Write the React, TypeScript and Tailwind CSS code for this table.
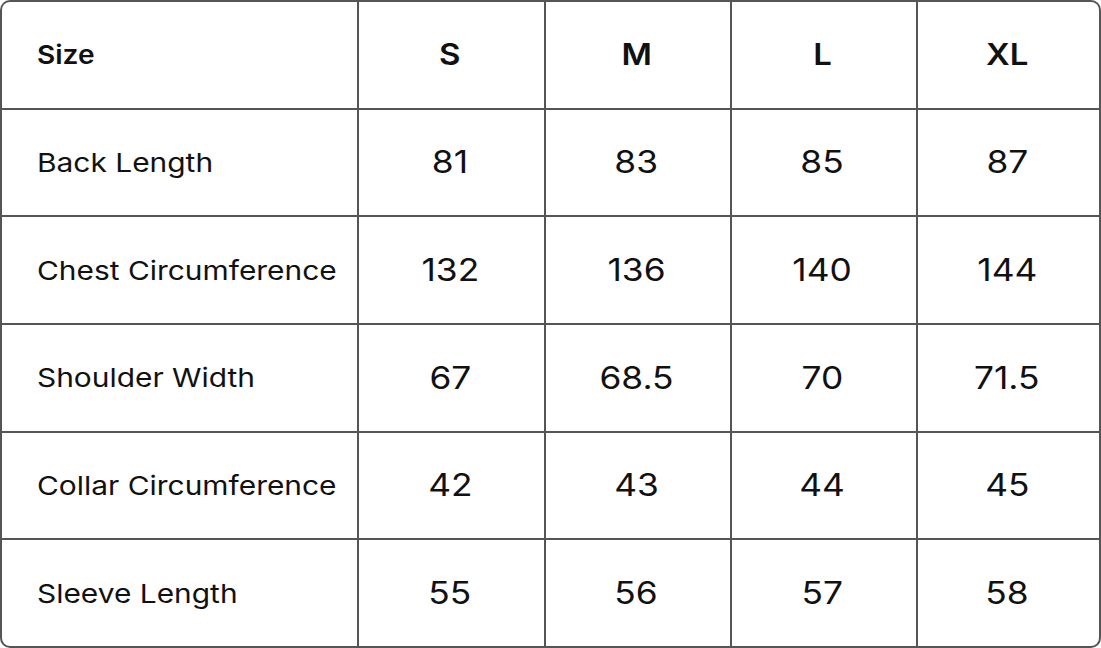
const sizes = ["S", "M", "L", "XL"];

const rows: { label: string; values: string[] }[] = [
  { label: "Back Length", values: ["81", "83", "85", "87"] },
  { label: "Chest Circumference", values: ["132", "136", "140", "144"] },
  { label: "Shoulder Width", values: ["67", "68.5", "70", "71.5"] },
  { label: "Collar Circumference", values: ["42", "43", "44", "45"] },
  { label: "Sleeve Length", values: ["55", "56", "57", "58"] },
];

export default function App() {
  return (
    <div className="w-[1101px] h-[648px] bg-white" style={{ fontFamily: "Inter, 'Noto Sans', sans-serif" }}>
      <div className="w-full h-full border-2 border-[#555555] rounded-[10px] overflow-hidden bg-[#555555]">
        <div className="grid grid-cols-[355px_185px_184px_184px_1fr] grid-rows-6 gap-[2px] h-full">
          {/* header */}
          <div className="bg-white flex items-center pl-[35px] text-[26px] font-semibold text-[#111111]">
            <span className="inline-block origin-left scale-x-[1.08]">Size</span>
          </div>
          {sizes.map((s) => (
            <div key={s} className="bg-white flex items-center justify-center pr-[3px] text-[30px] font-semibold text-[#111111]">
              <span className="inline-block scale-x-[1.1]">{s}</span>
            </div>
          ))}

          {rows.map((row) => (
            <>
              <div key={row.label} className="bg-white flex items-center pl-[35px] text-[26px] text-[#111111]">
                <span className="inline-block origin-left scale-x-[1.15] whitespace-nowrap">{row.label}</span>
              </div>
              {row.values.map((v, i) => (
                <div key={row.label + i} className="bg-white flex items-center justify-center pr-[3px] text-[31px] text-[#111111]">
                  <span className="inline-block scale-x-[1.14]">{v}</span>
                </div>
              ))}
            </>
          ))}
        </div>
      </div>
    </div>
  );
}
